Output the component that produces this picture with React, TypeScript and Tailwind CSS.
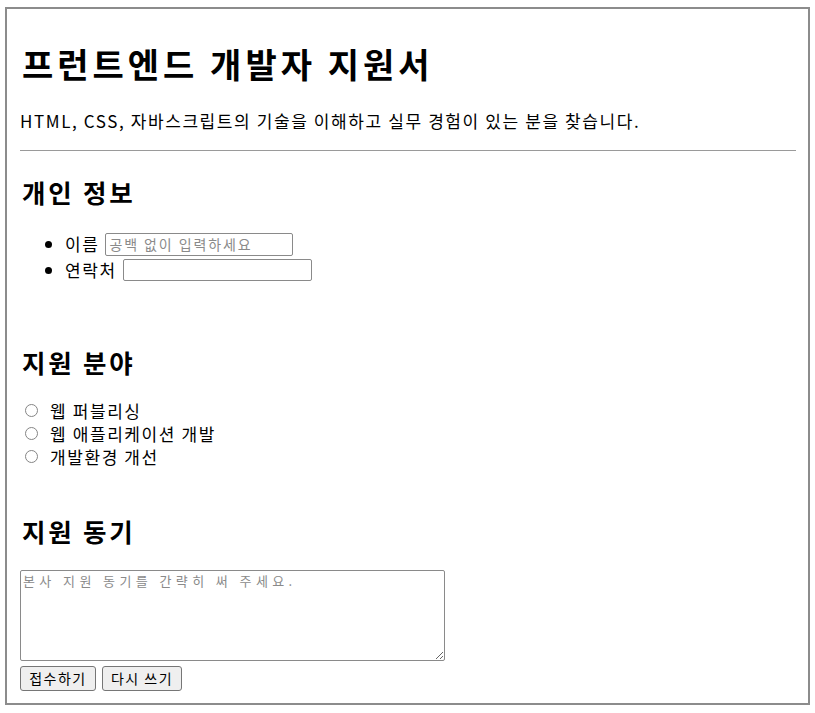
import { useState } from 'react';

// 지원 분야 radio options
const fields = ['웹 퍼블리싱', '웹 애플리케이션 개발', '개발환경 개선'];

const font = 'font-["Noto_Sans_CJK_KR","Noto_Sans",sans-serif]';

export default function App() {
  const [field, setField] = useState<string | null>(null);

  return (
    <div className={`min-h-[713px] bg-white pt-[7px] pl-[5px] text-black ${font}`}>
      <form
        onSubmit={(e) => e.preventDefault()}
        className="flex w-[805px] flex-col border-2 border-[#8c8c8c] pl-[13px] pr-[12px] pb-[12px]"
      >
        <h1 className="mt-[33px] pl-[2px] text-[34px] font-bold leading-[43px] tracking-[4px]">
          프런트엔드 개발자 지원서
        </h1>
        <p className="mt-[25px] text-[17px] leading-[21px] tracking-[1.6px]">
          HTML, CSS, 자바스크립트의 기술을 이해하고 실무 경험이 있는 분을 찾습니다.
        </p>
        <hr className="mt-[19px] border-t border-[#9a9a9a]" />

        {/* 개인 정보 */}
        <h2 className="mt-[25px] pl-[2px] text-[25.5px] font-bold leading-[32px] tracking-[2.8px]">개인 정보</h2>
        <ul className="mt-[23px] list-disc pl-[45px] text-[17px] tracking-[1.6px]">
          <li className="h-[26px] leading-[26px]">
            <span className="inline-flex items-center">
              이름
              <input
                type="text"
                placeholder="공백 없이 입력하세요"
                className="ml-[6px] h-[23px] w-[188px] rounded-[2px] border border-[#8a8a8a] px-[3px] text-[14px] tracking-[1.9px] placeholder:text-[#8a8a8a]"
              />
            </span>
          </li>
          <li className="h-[26px] leading-[26px]">
            <span className="inline-flex items-center">
              연락처
              <input
                type="text"
                className="ml-[6px] h-[22px] w-[189px] rounded-[2px] border border-[#8a8a8a] px-[3px] text-[14px]"
              />
            </span>
          </li>
        </ul>

        {/* 지원 분야 */}
        <h2 className="mt-[63px] pl-[2px] text-[25.5px] font-bold leading-[32px] tracking-[2.8px]">지원 분야</h2>
        <div className="mt-[21px] flex flex-col">
          {fields.map((f) => (
            <label key={f} className="flex h-[23px] items-center text-[17px] leading-[23px] tracking-[1.6px]">
              <input
                type="radio"
                name="field"
                checked={field === f}
                onChange={() => setField(f)}
                className="ml-[5px] h-[13px] w-[13px] appearance-none rounded-full border border-[#858585] bg-white checked:border-[4px] checked:border-[#0075ff]"
              />
              <span className="ml-[12px]">{f}</span>
            </label>
          ))}
        </div>

        {/* 지원 동기 */}
        <h2 className="mt-[47px] pl-[2px] text-[25.5px] font-bold leading-[32px] tracking-[2.8px]">지원 동기</h2>
        <textarea
          placeholder="본사 지원 동기를 간략히 써 주세요."
          className="mt-[23px] h-[91px] w-[425px] rounded-[2px] border border-[#8a8a8a] px-[2px] py-[1px] text-[13px] leading-[17px] tracking-[4.4px] placeholder:text-[#8a8a8a]"
        />
        <div className="mt-[5px] flex gap-[6px]">
          <button
            type="submit"
            className="h-[25px] w-[76px] rounded-[3px] border border-[#767676] bg-[#efefef] text-[14px] leading-[23px] tracking-[1.5px]"
          >
            접수하기
          </button>
          <button
            type="reset"
            className="h-[25px] w-[80px] rounded-[3px] border border-[#767676] bg-[#efefef] text-[14px] leading-[23px] tracking-[1.5px]"
          >
            다시 쓰기
          </button>
        </div>
      </form>
    </div>
  );
}
